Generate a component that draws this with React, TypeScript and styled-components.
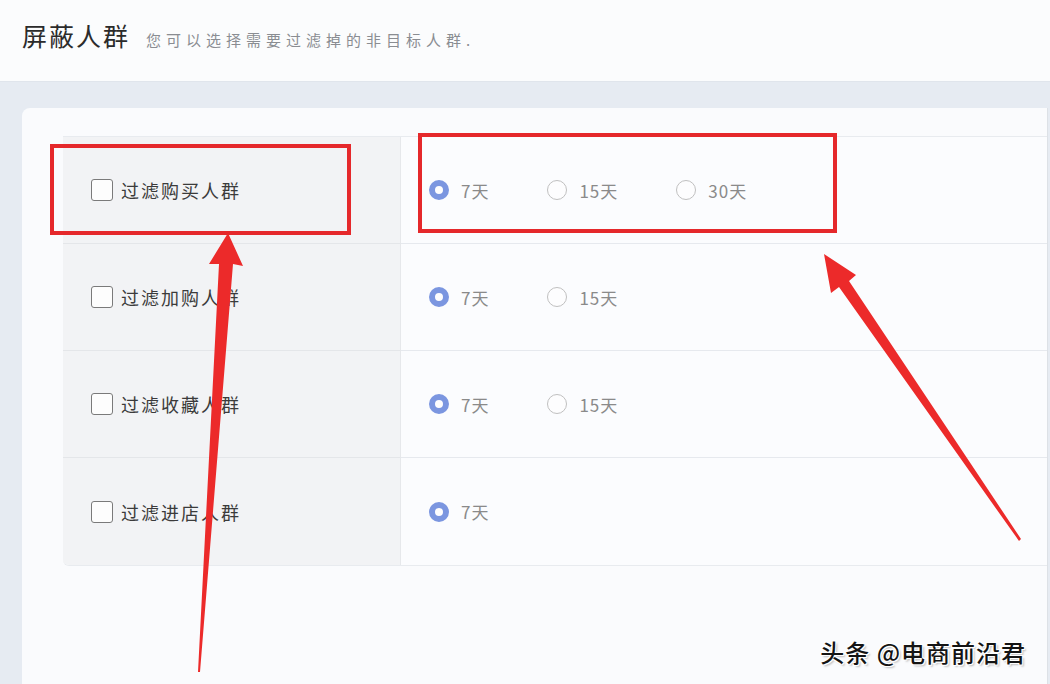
import React from 'react'
import styled, { createGlobalStyle } from 'styled-components'

/*
 * Types
 */

type Option = {
    label: string
    checked?: boolean
}

type FilterRowData = {
    label: string
    options: Option[]
}

/*
 * Data
 */

const rows: FilterRowData[] = [
    {
        label: '过滤购买人群',
        options: [{ label: '7天', checked: true }, { label: '15天' }, { label: '30天' }],
    },
    {
        label: '过滤加购人群',
        options: [{ label: '7天', checked: true }, { label: '15天' }],
    },
    {
        label: '过滤收藏人群',
        options: [{ label: '7天', checked: true }, { label: '15天' }],
    },
    {
        label: '过滤进店人群',
        options: [{ label: '7天', checked: true }],
    },
]

/*
 * Styles
 */

const GlobalStyle = createGlobalStyle`
    html, body {
        margin: 0;
        padding: 0;
        background: #e6ebf2;
        font-family: "Noto Sans CJK SC", "Noto Sans", sans-serif;
    }
`

const Page = styled.div`
    position: relative;
    width: 1050px;
    height: 684px;
    overflow: hidden;
    display: flex;
    flex-direction: column;
    background: #e6ebf2;
`

const Header = styled.div`
    height: 82px;
    box-sizing: border-box;
    padding: 17px 22px 0;
    display: flex;
    align-items: baseline;
    background: #fbfcfd;
    border-bottom: 1px solid #e0e5ec;
`

const Title = styled.h1`
    margin: 0;
    font-size: 25px;
    font-weight: 400;
    letter-spacing: 2px;
    color: #2b2b2b;
`

const Subtitle = styled.span`
    margin-left: 16px;
    font-size: 15px;
    letter-spacing: 5px;
    color: #8a8d92;
`

const Body = styled.div`
    flex: 1;
    padding: 26px 2px 0 22px;
    display: flex;
`

const Card = styled.div`
    flex: 1;
    background: #fafbfd;
    border-radius: 8px 0 0 0;
    border-right: 1px solid #dde1e6;
    padding: 28px 0 0 41px;
`

const Table = styled.div`
    display: grid;
    grid-template-columns: 338px 1fr;
    border-top: 1px solid #e8ebef;
    border-bottom: 1px solid #e8ebef;
    border-radius: 0 0 0 6px;
    overflow: hidden;
`

const LabelCell = styled.div<{ $last: boolean }>`
    height: 107px;
    box-sizing: border-box;
    padding-left: 28px;
    display: flex;
    align-items: center;
    gap: 8px;
    background: #f2f3f5;
    border-right: 1px solid #e6e8eb;
    border-bottom: ${({ $last }) => ($last ? 'none' : '1px solid #e4e6e9')};
`

const OptionCell = styled.div<{ $last: boolean }>`
    height: 107px;
    box-sizing: border-box;
    padding-left: 28px;
    display: flex;
    align-items: center;
    gap: 58px;
    background: #fbfcfe;
    border-bottom: ${({ $last }) => ($last ? 'none' : '1px solid #e6e9ee')};
`

const Checkbox = styled.span`
    width: 20px;
    height: 20px;
    border: 1.5px solid #7a7a7a;
    border-radius: 3px;
    background: #fdfdfd;
`

const RowLabel = styled.span`
    font-size: 18px;
    letter-spacing: 2px;
    color: #3b3b3b;
`

const RadioItem = styled.label`
    display: flex;
    align-items: center;
    gap: 12px;
`

const RadioDot = styled.span<{ $checked: boolean }>`
    width: 20px;
    height: 20px;
    box-sizing: border-box;
    border-radius: 50%;
    background: #fdfdfe;
    border: ${({ $checked }) => ($checked ? '6.5px solid #7b96e0' : '1px solid #c0c0c0')};
`

const RadioLabel = styled.span`
    font-size: 17px;
    letter-spacing: 1px;
    color: #8a8a8a;
`

const Marker = styled.div<{ $x: number; $y: number; $w: number; $h: number }>`
    position: absolute;
    left: ${({ $x }) => $x}px;
    top: ${({ $y }) => $y}px;
    width: ${({ $w }) => $w}px;
    height: ${({ $h }) => $h}px;
    box-sizing: border-box;
    border: 4px solid #e5282b;
    pointer-events: none;
`

const Arrows = styled.svg`
    position: absolute;
    left: 0;
    top: 0;
    pointer-events: none;
`

const Watermark = styled.div`
    position: absolute;
    right: 24px;
    bottom: 15px;
    font-size: 24px;
    font-weight: 500;
    letter-spacing: 1px;
    color: #141414;
    text-shadow: 1px 1px 0 #fff, -1px -1px 0 #fff, 1px -1px 0 #fff, -1px 1px 0 #fff, 2px 2px 2px rgba(0, 0, 0, 0.25);
`

/*
 * App
 */

export default function App() {
    return (
        <>
            <GlobalStyle />
            <Page>
                <Header>
                    <Title>屏蔽人群</Title>
                    <Subtitle>您可以选择需要过滤掉的非目标人群.</Subtitle>
                </Header>
                <Body>
                    <Card>
                        <Table>
                            {rows.map((row, index) => {
                                const last = index === rows.length - 1
                                return (
                                    <React.Fragment key={row.label}>
                                        <LabelCell $last={last}>
                                            <Checkbox />
                                            <RowLabel>{row.label}</RowLabel>
                                        </LabelCell>
                                        <OptionCell $last={last}>
                                            {row.options.map((option) => (
                                                <RadioItem key={option.label}>
                                                    <RadioDot $checked={!!option.checked} />
                                                    <RadioLabel>{option.label}</RadioLabel>
                                                </RadioItem>
                                            ))}
                                        </OptionCell>
                                    </React.Fragment>
                                )
                            })}
                        </Table>
                    </Card>
                </Body>

                <Marker $x={50} $y={144} $w={301} $h={91} />
                <Marker $x={418} $y={133} $w={419} $h={100} />

                <Arrows width="1050" height="684" viewBox="0 0 1050 684">
                    <polygon
                        fill="#ec2a2a"
                        points="228,233 243,266 233,264 200,672 198,672 219,264 209,264"
                    />
                    <polygon
                        fill="#ec2a2a"
                        points="824,254 856,275 849,281 1021,539 1019,541 839,287 831,293"
                    />
                </Arrows>

                <Watermark>头条 @电商前沿君</Watermark>
            </Page>
        </>
    )
}
